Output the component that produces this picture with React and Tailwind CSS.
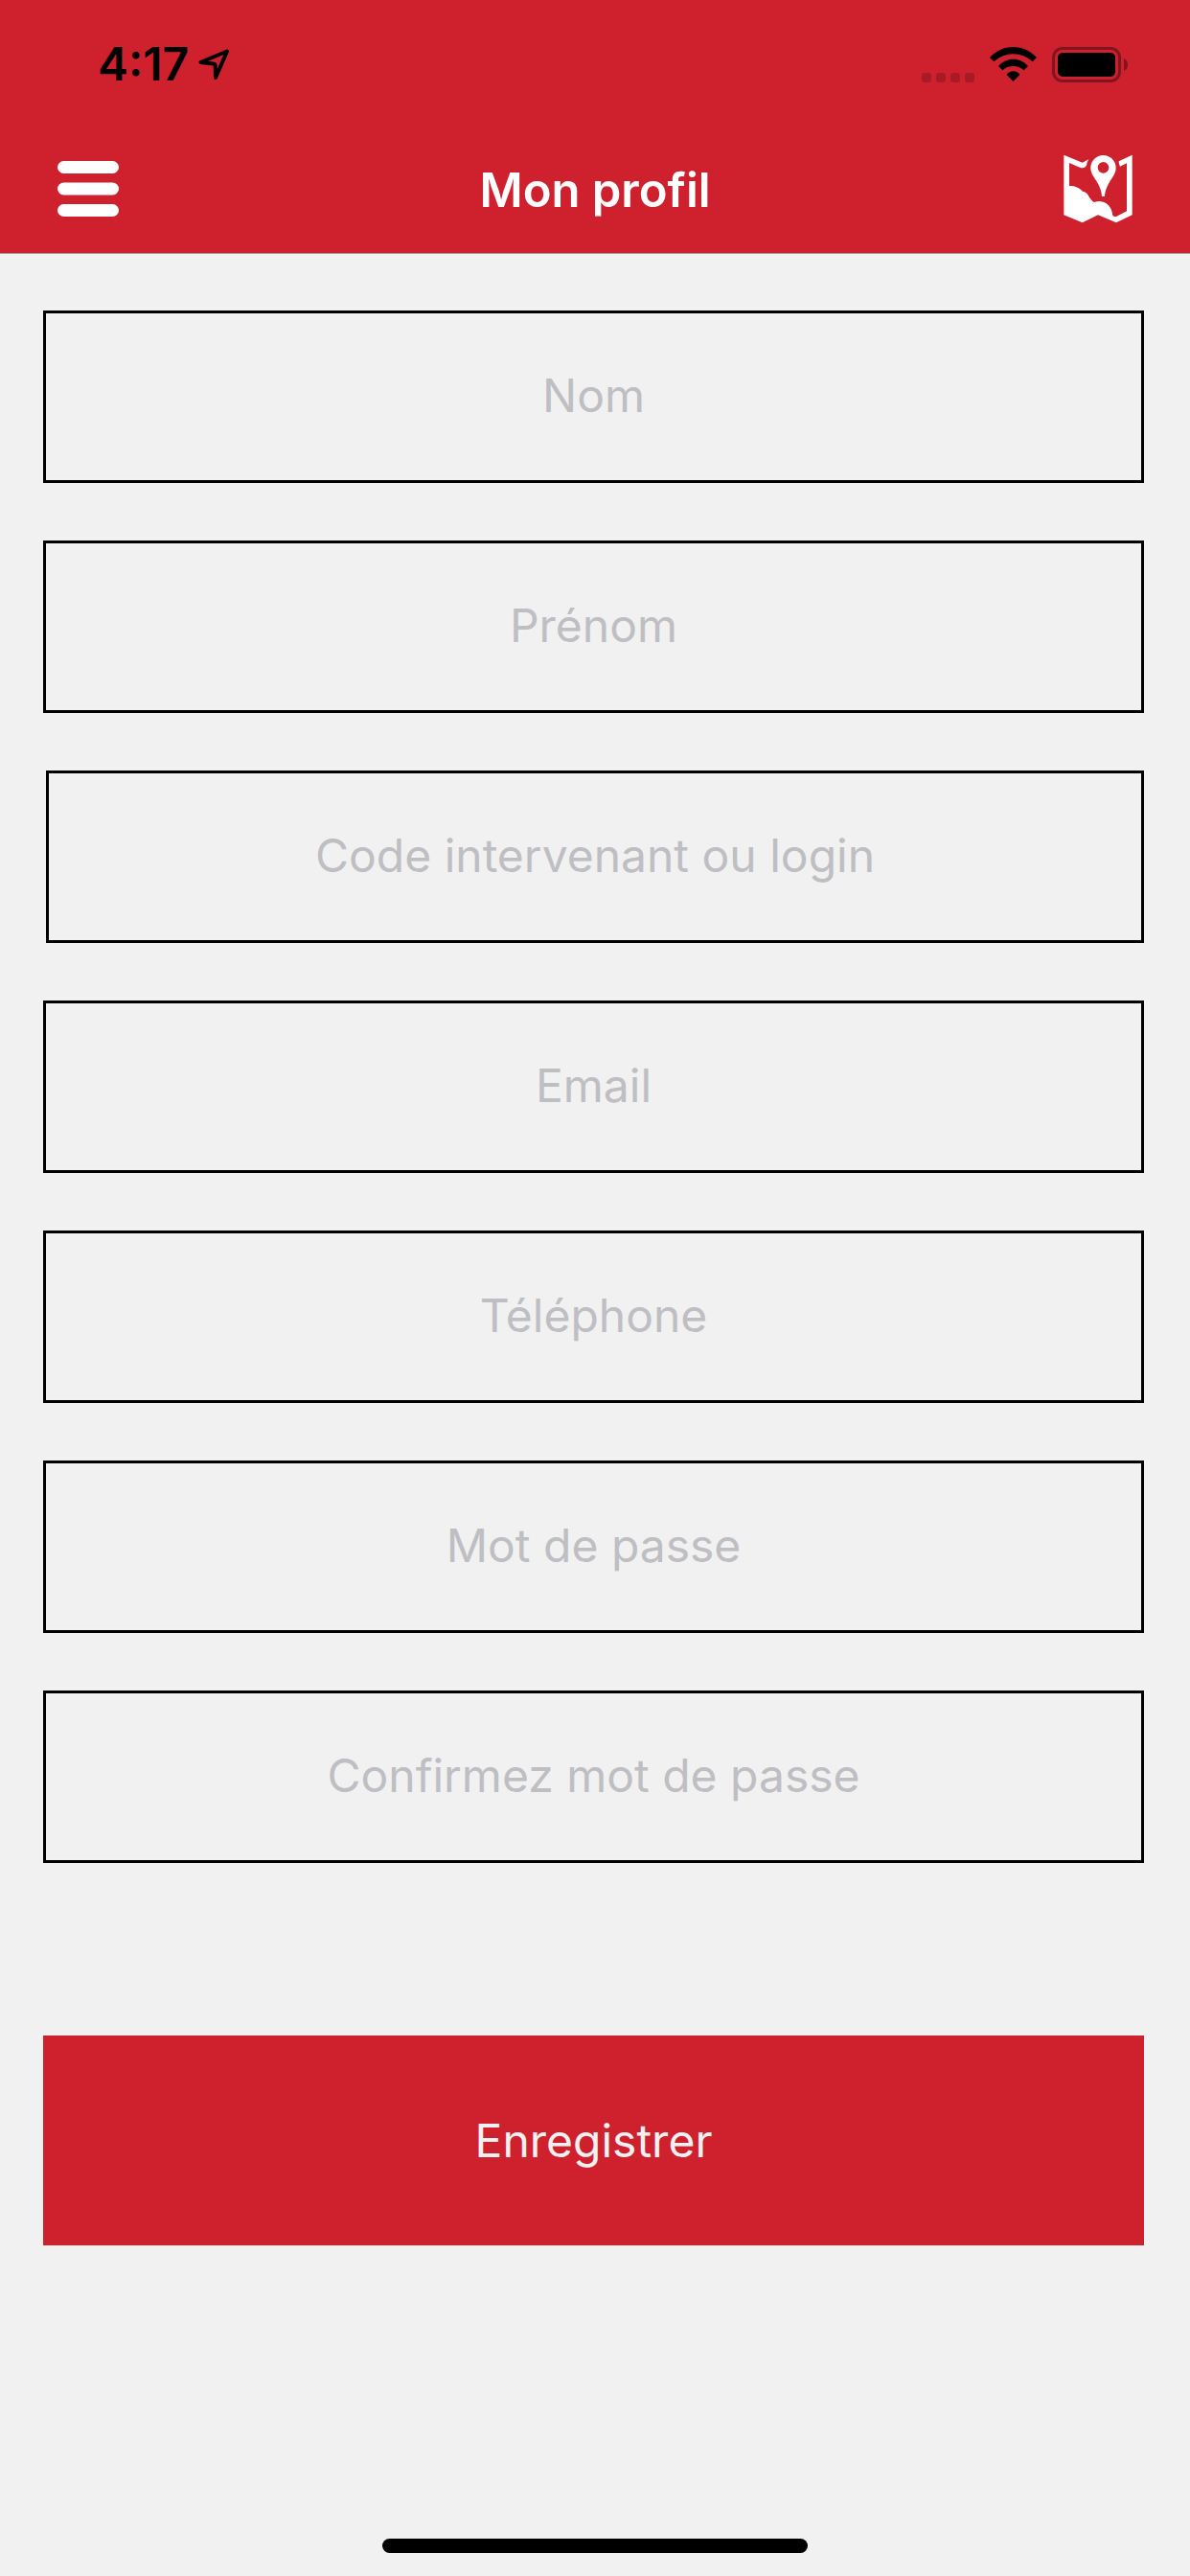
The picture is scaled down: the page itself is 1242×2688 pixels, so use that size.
const FIELDS = [
  { name: "nom", label: "Nom", type: "text" },
  { name: "prenom", label: "Prénom", type: "text" },
  { name: "login", label: "Code intervenant ou login", type: "text", inset: true },
  { name: "email", label: "Email", type: "email" },
  { name: "telephone", label: "Téléphone", type: "tel" },
  { name: "password", label: "Mot de passe", type: "password" },
  { name: "confirm", label: "Confirmez mot de passe", type: "password" },
]

function LocationIcon() {
  return (
    <svg width="33" height="33" viewBox="0 0 33 33" fill="none" stroke="black" strokeWidth="4" strokeLinejoin="round">
      <path d="M30 2.500 2.500 14 15.500 15.500Q17.500 15.500 17.700 17.500L18 30Z" />
    </svg>
  )
}

function WifiIcon() {
  return (
    <svg width="49" height="36" viewBox="336 148 147 108" fill="black">
      <path d="M336 181C377 137 442 137 483 181L470 194C435 162 384 162 349 194Z" />
      <path d="M363 208C389 179 430 179 456 208L443 221C424 204 395 204 376 221Z" />
      <path d="M389 235C400 220 419 220 430 235L409.500 256Z" />
    </svg>
  )
}

function BatteryIcon() {
  return (
    <svg width="80" height="37" viewBox="0 0 80 37">
      <rect x="1.500" y="1.500" width="69" height="34" rx="9.500" fill="none" stroke="#7f151e" strokeWidth="3" />
      <rect x="6" y="6" width="60" height="25" rx="5" fill="black" />
      <path d="M75 12Q79 14 79 18.500T75 25Z" fill="#7f151e" />
    </svg>
  )
}

function SignalDots() {
  return (
    <div className="flex gap-[5px] self-end">
      {[0, 1, 2, 3].map((i) => (
        <span key={i} className="h-[10px] w-[10px] rounded-[3px] bg-[#a81a26]" />
      ))}
    </div>
  )
}

function MenuIcon() {
  return (
    <svg width="64" height="60" viewBox="0 0 64 60" fill="white">
      <rect y="0" width="64" height="13" rx="6.500" />
      <rect y="22.500" width="64" height="13" rx="6.500" />
      <rect y="45" width="64" height="13" rx="6.500" />
    </svg>
  )
}

function MapIcon() {
  return (
    <svg width="72" height="74" viewBox="570 483 216 222" fill="white">
      <path d="M571 485 629 509 649 499Q643 507 643 514C641 526 630 528 621 524L588 510V582C607 582 619 588 630 599C646 602 647 613 654 622Q659 630 666 633Q674 630 683 630C705 631 722 649 724 675Q728 679 735 678L768 661V511L747 521Q743 514 743 505L785 485V673L735 697 678 673 629 697 571 673Z" />
      <path
        fillRule="evenodd"
        d="M694.500 486C716 486 734 503 734 525C734 541 726 551 717 565C708 580 700 595 699 615H690C689 595 681 580 672 565C663 551 655 541 655 525C655 503 673 486 694.500 486ZM694.500 507A17.500 17.500 0 1 0 694.500 542A17.500 17.500 0 1 0 694.500 507Z"
      />
    </svg>
  )
}

function StatusBar() {
  return (
    <div className="flex h-[132px] items-center justify-between pt-0.5 pr-16 pl-[102px]">
      <div className="flex items-center gap-2.5">
        <span className="text-[48px] leading-none font-semibold text-black">4:17</span>
        <LocationIcon />
      </div>
      <div className="flex items-center gap-4">
        <SignalDots />
        <WifiIcon />
        <BatteryIcon />
      </div>
    </div>
  )
}

function NavBar() {
  return (
    <div className="grid h-[132px] grid-cols-3 items-center px-[60px]">
      <button type="button" aria-label="Menu" className="justify-self-start">
        <MenuIcon />
      </button>
      <h1 className="text-center text-[49px] leading-none font-semibold text-white">Mon profil</h1>
      <button type="button" aria-label="Carte" className="justify-self-end">
        <MapIcon />
      </button>
    </div>
  )
}

function Field({ name, label, type, inset }) {
  return (
    <div className={inset ? "pl-[3px]" : ""}>
      <input
        name={name}
        type={type}
        aria-label={label}
        placeholder={label}
        className="block h-[180px] w-full border-3 border-black bg-transparent px-6 pb-1 text-center text-[48px] text-black outline-none placeholder:text-[#bebec3]"
      />
    </div>
  )
}

export default function App() {
  return (
    <div className="flex min-h-screen flex-col bg-[#f1f1f1] font-[Inter,sans-serif]">
      <header className="border-b border-[#a0a0a0] bg-[#cf202e]">
        <StatusBar />
        <NavBar />
      </header>

      <main className="flex-1 pt-[59px] pr-12 pl-[45px]">
        <form className="flex flex-col gap-[60px]" onSubmit={(e) => e.preventDefault()}>
          {FIELDS.map((field) => (
            <Field key={field.name} {...field} />
          ))}
          <button type="submit" className="mt-[120px] h-[219px] w-full bg-[#cf202e] text-[48px] text-[#f1f1f1]">
            Enregistrer
          </button>
        </form>
      </main>

      <div className="mx-auto mb-6 h-[15px] w-[444px] rounded-full bg-black" />
    </div>
  )
}
